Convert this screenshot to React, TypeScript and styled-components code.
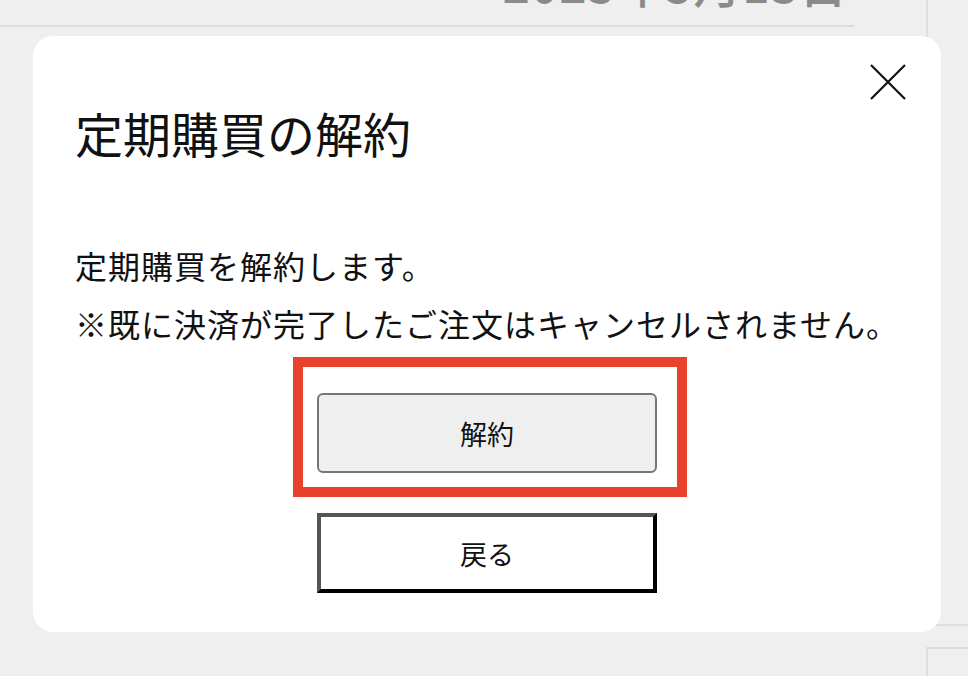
import styled, { createGlobalStyle } from "styled-components";

const GlobalStyle = createGlobalStyle`
  html, body {
    margin: 0;
    padding: 0;
    background: #efefef;
    font-family: "Noto Sans CJK JP", "Noto Sans", sans-serif;
    color: #111;
  }
`;

const Page = styled.div`
  display: flex;
  width: 968px;
  height: 676px;
  overflow: hidden;
`;

const Main = styled.div`
  width: 854px;
`;

const Header = styled.div`
  height: 25px;
  border-bottom: 2px solid #dcdcdc;
  display: flex;
  justify-content: flex-end;
  padding-right: 6px;
  overflow: hidden;
`;

const DateText = styled.div`
  margin-top: -38px;
  font-size: 48px;
  line-height: 40px;
  font-weight: 500;
  letter-spacing: 1px;
  color: #8a8a8a;
`;

const Side = styled.div`
  margin-left: 72px;
  flex: 1;
  display: flex;
  flex-direction: column;
`;

const SidePanel = styled.div`
  height: 624px;
  border-left: 2px solid #dedede;
  border-bottom: 2px solid #dedede;
`;

const SideBox = styled.div`
  margin-top: 21px;
  flex: 1;
  border-left: 2px solid #dedede;
  border-top: 2px solid #dedede;
`;

const Modal = styled.div`
  position: absolute;
  left: 33px;
  top: 36px;
  width: 908px;
  height: 596px;
  box-sizing: border-box;
  background: #fff;
  border-radius: 20px;
  padding: 60px 42px 39px;
  display: flex;
  flex-direction: column;
`;

const CloseButton = styled.button`
  position: absolute;
  top: 28px;
  right: 35px;
  width: 36px;
  height: 36px;
  padding: 0;
  border: none;
  background: transparent;
  cursor: pointer;
  display: flex;
`;

const Title = styled.h2`
  margin: 0;
  font-size: 48px;
  line-height: 72px;
  font-weight: 400;
  color: #111;
`;

const Message = styled.p`
  margin: 68px 0 0;
  font-size: 32px;
  line-height: 58px;
  letter-spacing: 1px;
  color: #111;
  white-space: nowrap;
`;

const Highlight = styled.div`
  align-self: center;
  margin: 5px 0 0 6px;
  border: 10px solid #e8412c;
  padding: 26px 20px 14px 14px;
  display: flex;
`;

const ActionButton = styled.button<{ $variant: "primary" | "back" }>`
  width: 340px;
  height: 80px;
  box-sizing: border-box;
  font-family: "Noto Sans CJK JP", "Noto Sans", sans-serif;
  font-size: 27px;
  color: #111;
  cursor: pointer;
  ${({ $variant }) =>
    $variant === "primary"
      ? `
    background: #efefef;
    border: 2px solid #767676;
    border-radius: 6px;
  `
      : `
    align-self: center;
    margin-top: 16px;
    background: #fff;
    border-style: solid;
    border-width: 4px;
    border-color: #555 #000 #000 #555;
    border-radius: 0;
  `}
`;

const CloseIcon = () => (
  <svg width="36" height="36" viewBox="0 0 36 36">
    <path d="M1 1 L35 35 M35 1 L1 35" stroke="#111" strokeWidth="2.2" fill="none" />
  </svg>
);

export default function App() {
  return (
    <>
      <GlobalStyle />
      <Page>
        <Main>
          <Header>
            <DateText>2023年5月13日</DateText>
          </Header>
        </Main>
        <Side>
          <SidePanel />
          <SideBox />
        </Side>
      </Page>
      <Modal>
        <CloseButton aria-label="閉じる">
          <CloseIcon />
        </CloseButton>
        <Title>定期購買の解約</Title>
        <Message>
          定期購買を解約します。
          <br />
          ※既に決済が完了したご注文はキャンセルされません。
        </Message>
        <Highlight>
          <ActionButton $variant="primary">解約</ActionButton>
        </Highlight>
        <ActionButton $variant="back">戻る</ActionButton>
      </Modal>
    </>
  );
}
